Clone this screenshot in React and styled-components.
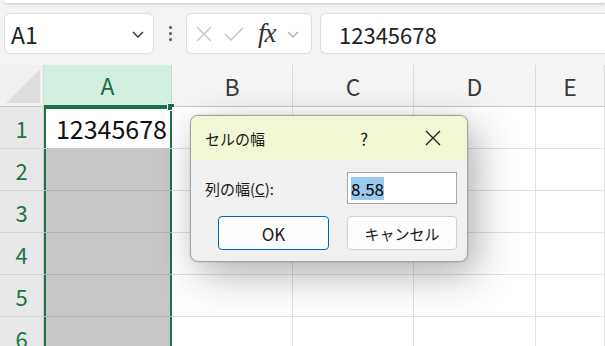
import { Fragment } from "react";
import styled, { createGlobalStyle } from "styled-components";

const GlobalStyle = createGlobalStyle`
  html, body {
    margin: 0;
    background: #f3f3f3;
    font-family: "Noto Sans CJK JP", "Noto Sans", sans-serif;
    overflow: hidden;
  }
`;

const Page = styled.div`
  position: relative;
  width: 605px;
  height: 346px;
  overflow: hidden;
  display: flex;
  flex-direction: column;
  background: #f3f3f3;

  & > * {
    flex-shrink: 0;
  }
`;

const RibbonEdge = styled.div`
  height: 3px;
  margin-left: 4px;
  background: #fff;
  border-radius: 0 0 0 8px;
  box-shadow: 0 1px 3px rgba(0, 0, 0, 0.2);
`;

const FormulaBar = styled.div`
  display: flex;
  align-items: center;
  height: 41px;
  margin-top: 10px;
  padding-left: 4px;
`;

const Box = styled.div`
  box-sizing: border-box;
  height: 41px;
  display: flex;
  align-items: center;
  background: #fff;
  border: 1px solid #dcdcdc;
  border-radius: 6px;
`;

const NameBox = styled(Box)`
  width: 150px;
  padding: 0 8px 0 6px;
  justify-content: space-between;
  font-size: 23px;
  color: #222;
`;

const Dots = styled.div`
  width: 32px;
  display: flex;
  flex-direction: column;
  align-items: center;
  gap: 3px;

  span {
    width: 3px;
    height: 3px;
    border-radius: 50%;
    background: #555;
  }
`;

const FxBox = styled(Box)`
  width: 126px;
  padding: 0 6px 0 8px;
  gap: 10px;
`;

const Fx = styled.span`
  font-family: "Liberation Serif", serif;
  font-style: italic;
  font-size: 27px;
  color: #333;
  margin-left: 3px;
  letter-spacing: -1px;
`;

const FormulaInput = styled(Box)`
  flex: 1;
  margin-left: 8px;
  border-right: none;
  border-radius: 6px 0 0 6px;
  padding-left: 18px;
  font-size: 22px;
  color: #222;
`;

const Sheet = styled.div`
  margin-top: 11px;
  display: grid;
  grid-template-columns: 44px 128px 121px 121px 122px 1fr;
  grid-auto-rows: 42px;
  background: #fff;
`;

const Corner = styled.div`
  box-sizing: border-box;
  position: relative;
  background: #f0f0f0;
  border-right: 1px solid #d6d6d6;
  border-bottom: 1px solid #c9c9c9;

  &::after {
    content: "";
    position: absolute;
    right: 3px;
    bottom: 3px;
    border-style: solid;
    border-width: 0 0 34px 34px;
    border-color: transparent transparent #dedede transparent;
  }
`;

const ColHeader = styled.div`
  box-sizing: border-box;
  display: flex;
  align-items: center;
  justify-content: center;
  font-size: 23px;
  color: ${(p) => (p.$active ? "#1b6b45" : "#3a3a3a")};
  background: ${(p) => (p.$active ? "#d3efdf" : "#f4f4f4")};
  border-right: 1px solid ${(p) => (p.$active ? "#c2dccd" : "#dadada")};
  border-bottom: ${(p) => (p.$active ? "2px solid #1e7145" : "1px solid #c9c9c9")};
`;

const RowHeader = styled.div`
  box-sizing: border-box;
  display: flex;
  align-items: center;
  justify-content: center;
  font-size: 22px;
  color: #217346;
  background: #e8e8e8;
  border-right: 1px solid #d0d0d0;
  border-bottom: 1px solid #d4d4d4;
`;

const Cell = styled.div`
  box-sizing: border-box;
  position: relative;
  display: flex;
  align-items: center;
  justify-content: flex-end;
  padding-right: 5px;
  font-size: 25px;
  color: #111;
  background: #fff;
  border-right: 1px solid #e1e1e1;
  border-bottom: 1px solid #e1e1e1;
`;

const SelCell = styled(Cell)`
  background: ${(p) => (p.$active ? "#fff" : "#c7c7c7")};
  border-right: none;
  border-bottom: 1px solid ${(p) => (p.$active ? "#c7c7c7" : "#b3b3b3")};
  box-shadow: inset 2px 0 #1e7145, inset -2px 0 #1e7145
    ${(p) => (p.$active ? ", inset 0 2px #1e7145" : "")};
`;

const Handle = styled.span`
  position: absolute;
  right: -3px;
  top: -4px;
  width: 6px;
  height: 6px;
  background: #1e7145;
  border: 1px solid #fff;
`;

const Dialog = styled.div`
  position: absolute;
  left: 190px;
  top: 115px;
  width: 278px;
  box-sizing: border-box;
  background: #f0f0f0;
  border: 1px solid #a3a3a3;
  border-radius: 8px;
  overflow: hidden;
  box-shadow: 8px 12px 40px rgba(0, 0, 0, 0.32), 0 0 2px rgba(0, 0, 0, 0.2);
  font-size: 15px;
  color: #1a1a1a;
`;

const TitleBar = styled.div`
  height: 44px;
  display: flex;
  align-items: center;
  padding-left: 14px;
  background: #f2f7d3;
`;

const Title = styled.div`
  flex: 1;
  font-size: 15px;
`;

const TitleButton = styled.div`
  width: ${(p) => p.$w}px;
  display: flex;
  align-items: center;
  justify-content: center;
  font-size: 17px;
`;

const Body = styled.div`
  display: flex;
  flex-direction: column;
  gap: 12px;
  padding: 12px 10px 11px 14px;
`;

const FieldRow = styled.div`
  display: flex;
  align-items: center;
  justify-content: space-between;
`;

const Input = styled.div`
  box-sizing: border-box;
  width: 110px;
  height: 32px;
  display: flex;
  align-items: center;
  padding-left: 3px;
  background: #fff;
  border: 1px solid #a8a8a8;
  font-size: 17px;

  span {
    background: #99c9ef;
    color: #000;
    line-height: 23px;
  }
`;

const ButtonRow = styled.div`
  display: flex;
  justify-content: flex-end;
  gap: 18px;
`;

const Button = styled.div`
  box-sizing: border-box;
  width: ${(p) => (p.$primary ? 111 : 110)}px;
  height: 34px;
  display: flex;
  align-items: center;
  justify-content: center;
  background: #fdfdfd;
  border: 1px solid ${(p) => (p.$primary ? "#0067c0" : "#d0d0d0")};
  border-radius: 4px;
  font-size: ${(p) => (p.$primary ? 17 : 15)}px;
`;

const Chevron = ({ color = "#333", size = 14 }) => (
  <svg width={size} height={size} viewBox="0 0 14 14">
    <path d="M2 5l5 5 5-5" fill="none" stroke={color} strokeWidth="1.4" />
  </svg>
);

const columns = ["B", "C", "D", "E"];
const rows = [1, 2, 3, 4, 5, 6];

export default function App() {
  return (
    <Page>
      <GlobalStyle />
      <RibbonEdge />
      <FormulaBar>
        <NameBox>
          <span>A1</span>
          <Chevron />
        </NameBox>
        <Dots>
          <span />
          <span />
          <span />
        </Dots>
        <FxBox>
          <svg width="18" height="18" viewBox="0 0 18 18">
            <path d="M2 2l14 14M16 2L2 16" stroke="#c4c4c4" strokeWidth="1.4" />
          </svg>
          <svg width="22" height="18" viewBox="0 0 22 18">
            <path d="M2 9l6 6L20 3" fill="none" stroke="#c4c4c4" strokeWidth="1.4" />
          </svg>
          <Fx>fx</Fx>
          <Chevron color="#b0b0b0" />
        </FxBox>
        <FormulaInput>12345678</FormulaInput>
      </FormulaBar>

      <Sheet>
        <Corner />
        <ColHeader $active>A</ColHeader>
        {columns.map((c) => (
          <ColHeader key={c}>{c}</ColHeader>
        ))}
        {rows.map((r) => (
          <Fragment key={r}>
            <RowHeader>{r}</RowHeader>
            <SelCell $active={r === 1}>
              {r === 1 && "12345678"}
              {r === 1 && <Handle />}
            </SelCell>
            {columns.map((c) => (
              <Cell key={c} />
            ))}
          </Fragment>
        ))}
      </Sheet>

      <Dialog>
        <TitleBar>
          <Title>セルの幅</Title>
          <TitleButton $w={70}>?</TitleButton>
          <TitleButton $w={68}>
            <svg width="16" height="16" viewBox="0 0 16 16">
              <path d="M1 1l14 14M15 1L1 15" stroke="#222" strokeWidth="1.4" />
            </svg>
          </TitleButton>
        </TitleBar>
        <Body>
          <FieldRow>
            <span>
              列の幅(<u>C</u>):
            </span>
            <Input>
              <span>8.58</span>
            </Input>
          </FieldRow>
          <ButtonRow>
            <Button $primary>OK</Button>
            <Button>キャンセル</Button>
          </ButtonRow>
        </Body>
      </Dialog>
    </Page>
  );
}
